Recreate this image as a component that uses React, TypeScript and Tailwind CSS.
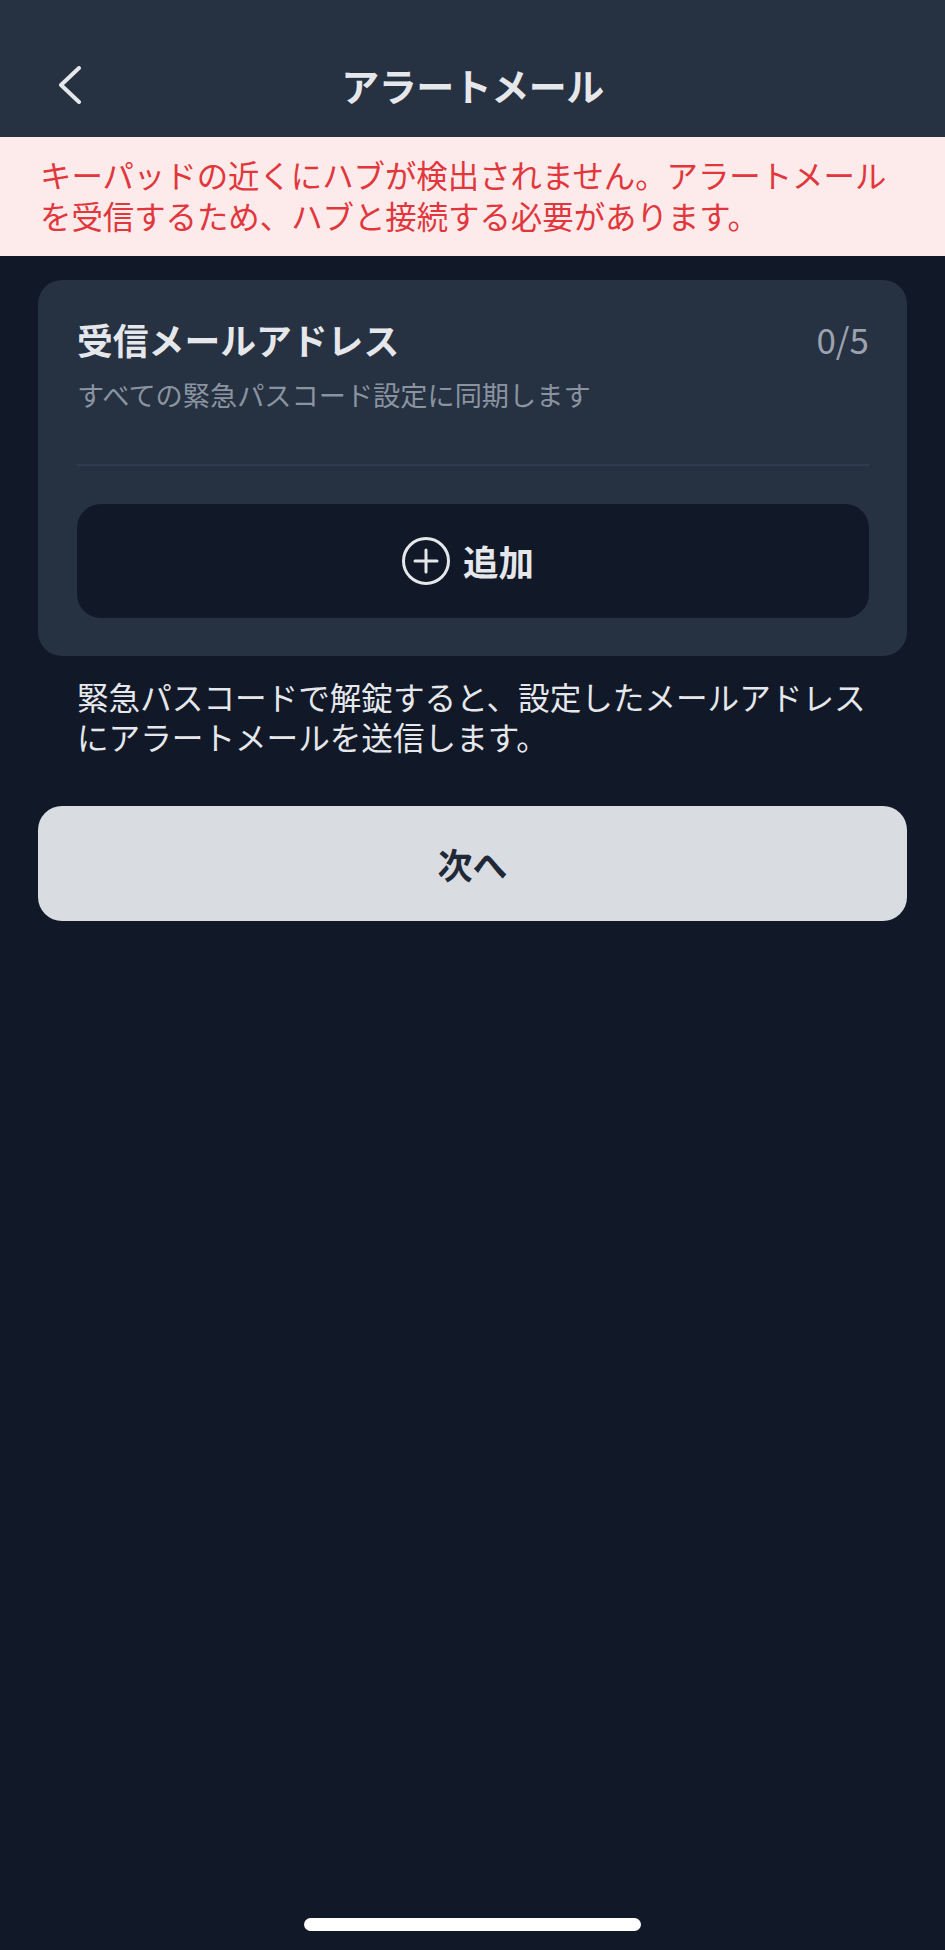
import React from "react";

const font = { fontFamily: '"Noto Sans CJK JP", "Noto Sans", sans-serif' };

export default function App() {
  return (
    <div
      className="w-[945px] h-[1950px] bg-[#111827] flex flex-col"
      style={font}
    >
      {/* Header */}
      <div className="h-[137px] bg-[#263141] pt-[32px] shrink-0">
        <div className="h-[105px] grid grid-cols-[1fr_auto_1fr] items-center">
          <div className="pl-[58px] flex items-center">
            <svg width="24" height="38" viewBox="0 0 24 38" fill="none">
              <polyline
                points="21,2 3,19 21,36"
                stroke="#e5e7eb"
                strokeWidth="4"
                strokeLinecap="round"
                strokeLinejoin="round"
              />
            </svg>
          </div>
          <div className="text-[38px] leading-[48px] font-bold text-[#e5e7eb] tracking-[-0.5px]">
            アラートメール
          </div>
          <div />
        </div>
      </div>

      {/* Warning banner */}
      <div className="h-[119px] bg-[#fdeaea] px-[40px] pt-[17px] shrink-0">
        <p className="text-[31.4px] leading-[41px] text-[#e1373c] whitespace-nowrap">
          キーパッドの近くにハブが検出されません。アラートメール
          <br />
          を受信するため、ハブと接続する必要があります。
        </p>
      </div>

      {/* Card */}
      <div className="mt-[24px] mx-[38px] rounded-[24px] bg-[#263142] pl-[39px] pr-[38px] pt-[37px] pb-[38px]">
        <div className="flex items-center justify-between">
          <span className="text-[35.8px] leading-[44px] font-bold text-[#e5e7eb]">
            受信メールアドレス
          </span>
          <span className="text-[35px] leading-[44px] text-[#9ca3af]">0/5</span>
        </div>
        <div className="mt-[15px] text-[27.2px] leading-[36px] text-[#8a93a0]">
          すべての緊急パスコード設定に同期します
        </div>
        <div className="mt-[52px] h-[2px] bg-[#2f3b4c]" />
        <div className="mt-[38px] h-[114px] rounded-[24px] bg-[#111827] flex items-center justify-center">
          <div className="flex items-center gap-[13px] mr-[10px]">
            <svg width="48" height="48" viewBox="0 0 48 48" fill="none" className="shrink-0">
              <circle cx="24" cy="24" r="22.5" stroke="#e5e7eb" strokeWidth="3" />
              <line x1="24" y1="13" x2="24" y2="35" stroke="#e5e7eb" strokeWidth="3" strokeLinecap="round" />
              <line x1="13" y1="24" x2="35" y2="24" stroke="#e5e7eb" strokeWidth="3" strokeLinecap="round" />
            </svg>
            <span className="text-[35.5px] leading-[44px] font-bold text-[#e5e7eb]">追加</span>
          </div>
        </div>
      </div>

      {/* Info text */}
      <p className="mt-[20px] px-[77px] text-[31.6px] leading-[40px] text-[#e5e7eb] whitespace-nowrap">
        緊急パスコードで解錠すると、設定したメールアドレス
        <br />
        にアラートメールを送信します。
      </p>

      {/* Next button */}
      <div className="mt-[50px] mx-[38px] h-[115px] rounded-[24px] bg-[#d9dce0] flex items-center justify-center">
        <span className="text-[35px] leading-[44px] font-semibold text-[#1f2937]">次へ</span>
      </div>

      {/* Home indicator */}
      <div className="mt-auto mb-[19px] self-center w-[337px] h-[13px] rounded-full bg-white" />
    </div>
  );
}
